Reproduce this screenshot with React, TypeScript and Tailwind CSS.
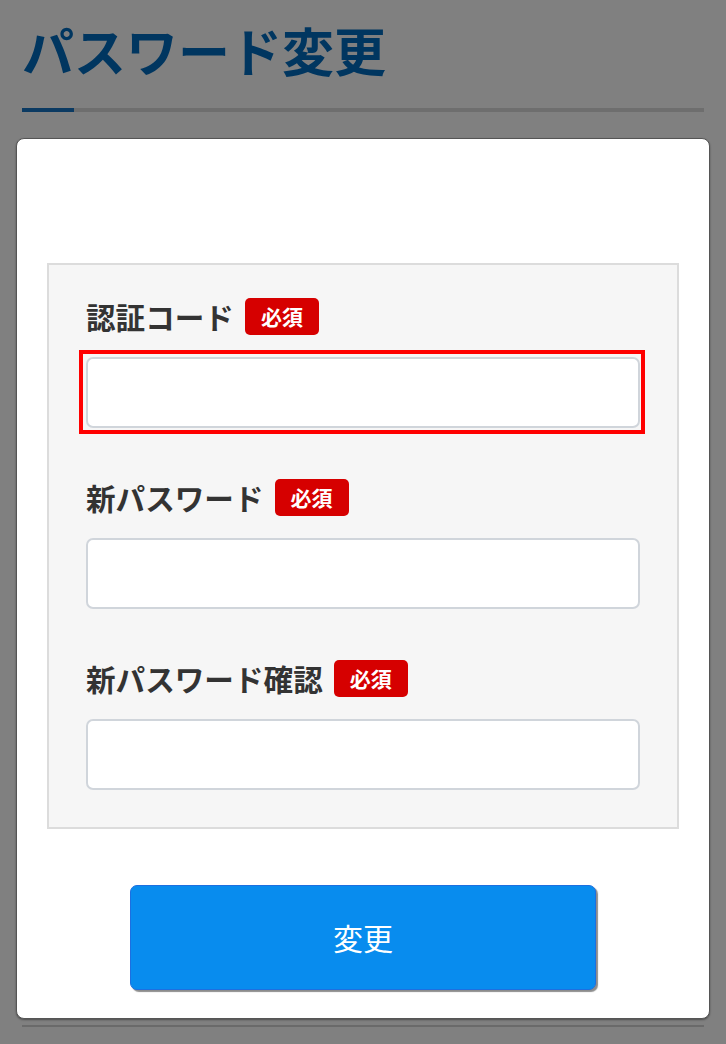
import React from "react";

const font = { fontFamily: '"Noto Sans CJK JP", "Noto Sans", sans-serif' };

type Field = { label: string; focused?: boolean };

const fields: Field[] = [
  { label: "認証コード", focused: true },
  { label: "新パスワード" },
  { label: "新パスワード確認" },
];

function RequiredBadge() {
  return (
    <span className="inline-flex h-[37px] w-[74px] items-center justify-center rounded-[5px] bg-[#d60000] text-[21px] font-bold leading-none text-white">
      必須
    </span>
  );
}

function FormRow({ label, focused }: Field) {
  const input = (
    <input
      type="password"
      className="h-[71px] w-full rounded-[7px] border-2 border-[#d0d5db] bg-white outline-none"
    />
  );

  return (
    <div className="flex flex-col">
      <div className="flex h-[37px] items-center gap-[11px]">
        <span className="text-[29.6px] font-bold leading-none text-[#333333]">{label}</span>
        <RequiredBadge />
      </div>
      {focused ? (
        // focus ring is square in the original, so it's a plain box round the field
        <div className="mt-[15px] ml-[-7px] mr-[-5px] mb-[-6px] border-4 border-[#ff0000] pt-[3px] pr-[1px] pb-[2px] pl-[3px]">
          {input}
        </div>
      ) : (
        <div className="mt-[22px]">{input}</div>
      )}
    </div>
  );
}

export default function App() {
  return (
    <div className="min-h-[1044px] w-full bg-[#808080] px-4 pt-[24px]" style={font}>
      {/* page heading */}
      <div className="px-[6px]">
        <h1 className="text-[52px] font-bold leading-none tracking-normal text-[#003660]">パスワード変更</h1>
        <div className="mt-[32px] flex h-[4px] w-full bg-[#6e6e6e]">
          <div className="h-full w-[52px] bg-[#0b3a62]" />
        </div>
      </div>

      {/* card */}
      <div className="mt-[26px] rounded-[8px] border border-[#555555] bg-white px-[30px] pt-[124px] pb-[28px] shadow-[0_1px_2px_rgba(0,0,0,0.4)]">
        <div className="flex flex-col gap-[51px] border-2 border-[#dcdcdc] bg-[#f6f6f6] pt-[33px] pr-[37px] pb-[37px] pl-[37px]">
          {fields.map((f) => (
            <FormRow key={f.label} {...f} />
          ))}
        </div>

        <div className="mt-[56px] flex justify-center">
          <button
            type="button"
            className="h-[105px] w-[466px] rounded-[7px] border border-[#1d6fe0] bg-[#088cee] text-[30px] text-white shadow-[2px_2px_1px_rgba(0,0,0,0.45)]"
          >
            変更
          </button>
        </div>
      </div>

      <div className="mx-[6px] mt-[6px] h-[2px] bg-[#6a6a6a]" />
    </div>
  );
}
